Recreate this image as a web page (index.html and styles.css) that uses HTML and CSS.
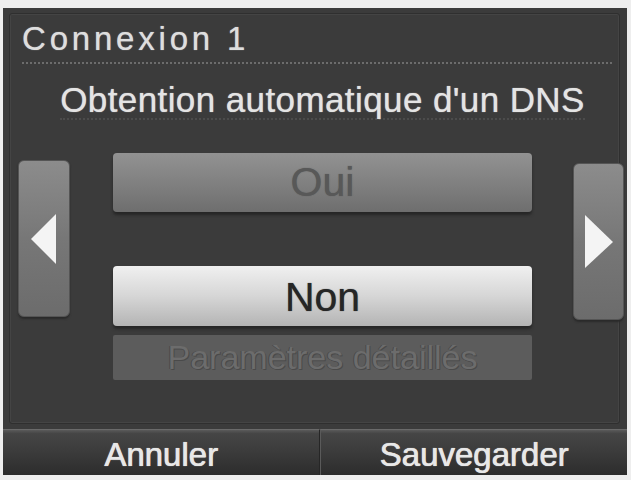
FILE: index.html
```html
<!DOCTYPE html>
<html lang="fr">
<head>
<meta charset="utf-8">
<title>Connexion 1</title>
<link rel="stylesheet" href="styles.css">
</head>
<body>
<div class="screen">
  <div class="panel">
    <div class="header">Connexion 1</div>
    <div class="subtitle">Obtention automatique d'un DNS</div>
    <div class="row">
      <div class="arrow arrow-left">
        <svg width="26" height="50" viewBox="0 0 26 50"><polygon points="0,25 25,0 25,50" fill="#f4f4f4"/></svg>
      </div>
      <div class="choices">
        <div class="btn btn-oui">Oui</div>
        <div class="btn btn-non">Non</div>
        <div class="btn btn-params">Paramètres détaillés</div>
      </div>
      <div class="arrow arrow-right">
        <svg width="28" height="53" viewBox="0 0 28 53"><polygon points="0,0 28,27 0,53" fill="#f4f4f4"/></svg>
      </div>
    </div>
  </div>
  <div class="bottombar">
    <div class="bbtn bbtn-left">Annuler</div>
    <div class="bbtn bbtn-right">Sauvegarder</div>
  </div>
</div>
</body>
</html>
```

FILE: styles.css
```css
html, body {
  margin: 0;
  padding: 0;
  background: #eeeeee;
}
body {
  width: 631px;
  height: 480px;
  overflow: hidden;
  font-family: "Liberation Sans", Arial, sans-serif;
}
.screen {
  margin: 8px 4px 0 3px;
  height: 467px;
  background: #3b3b3b;
  display: flex;
  flex-direction: column;
  padding: 5px 0 0 0;
  box-sizing: border-box;
}
.panel {
  margin: 0 7px 0 6px;
  height: 411px;
  border: 1px solid #2f2f2f;
  border-radius: 3px;
  box-shadow: inset 0 0 0 1px #444444;
  box-sizing: border-box;
  display: flex;
  flex-direction: column;
}
.header {
  margin: 0 7px 0 12px;
  padding-top: 2px;
  height: 46px;
  line-height: 46px;
  font-size: 33px;
  letter-spacing: 3.8px;
  color: #dedede;
  text-shadow: 0 0 1px #bdbdbd;
  border-bottom: 2px dotted #6c6c6c;
}
.subtitle {
  margin: 0 34px 0 50px;
  padding-top: 17px;
  line-height: 37px;
  height: 37px;
  font-size: 35px;
  letter-spacing: 0.4px;
  color: #e4e4e4;
  text-shadow: 0 0 1px #c8c8c8;
  text-align: center;
  white-space: nowrap;
  border-bottom: 2px dotted #4c4c4c;
}
.row {
  margin: 33px -6px 0 0;
  display: flex;
  align-items: flex-start;
}
.arrow {
  width: 52px;
  height: 157px;
  box-sizing: border-box;
  border: 1px solid #555555;
  border-radius: 6px;
  background: linear-gradient(#8c8c8c, #777777 50%, #6c6c6c);
  box-shadow: 0 2px 2px #2a2a2a;
  display: flex;
  align-items: center;
  justify-content: center;
}
.arrow-left {
  margin: 7px 0 0 8px;
}
.arrow-right {
  margin: 10px 0 0 41px;
  width: 51px;
}
.choices {
  margin-left: 43px;
  width: 419px;
  display: flex;
  flex-direction: column;
}
.btn {
  border-radius: 4px;
  text-align: center;
  font-size: 41px;
  box-sizing: border-box;
}
.btn-oui {
  height: 59px;
  line-height: 59px;
  background: linear-gradient(#929292, #7d7d7d 60%, #6e6e6e);
  color: #585858;
  text-shadow: 0 0 1px #555555;
  box-shadow: 0 3px 3px #262626;
}
.btn-non {
  margin-top: 54px;
  height: 60px;
  line-height: 62px;
  background: linear-gradient(#f0f0f0, #d6d6d6 50%, #b4b4b4);
  color: #262626;
  text-shadow: 0 0 1px #444444;
  box-shadow: 0 3px 3px #262626;
}
.btn-params {
  margin-top: 9px;
  height: 45px;
  line-height: 45px;
  font-size: 34px;
  background: #5c5c5c;
  color: #6c6c6c;
  border-radius: 2px;
  text-shadow: -1px 0 #4a4a4a, 1px 1px #4a4a4a;
  white-space: nowrap;
}
.bottombar {
  margin-top: 5px;
  height: 46px;
  display: flex;
}
.bbtn {
  flex: 1;
  box-sizing: border-box;
  padding-top: 4px;
  line-height: 42px;
  font-size: 33px;
  text-align: center;
  color: #e8e8e8;
  text-shadow: 0 0 1px #d0d0d0, 0.5px 0 0 #e8e8e8;
  background: linear-gradient(#5a5a5a, #454545 8%, #3b3b3b 50%, #2c2c2c);
  border-top: 1px solid #6a6a6a;
}
.bbtn-left {
  flex: 0 0 317px;
  border-right: 1px solid #262626;
}
.bbtn-right {
  border-left: 1px solid #5a5a5a;
}
```
